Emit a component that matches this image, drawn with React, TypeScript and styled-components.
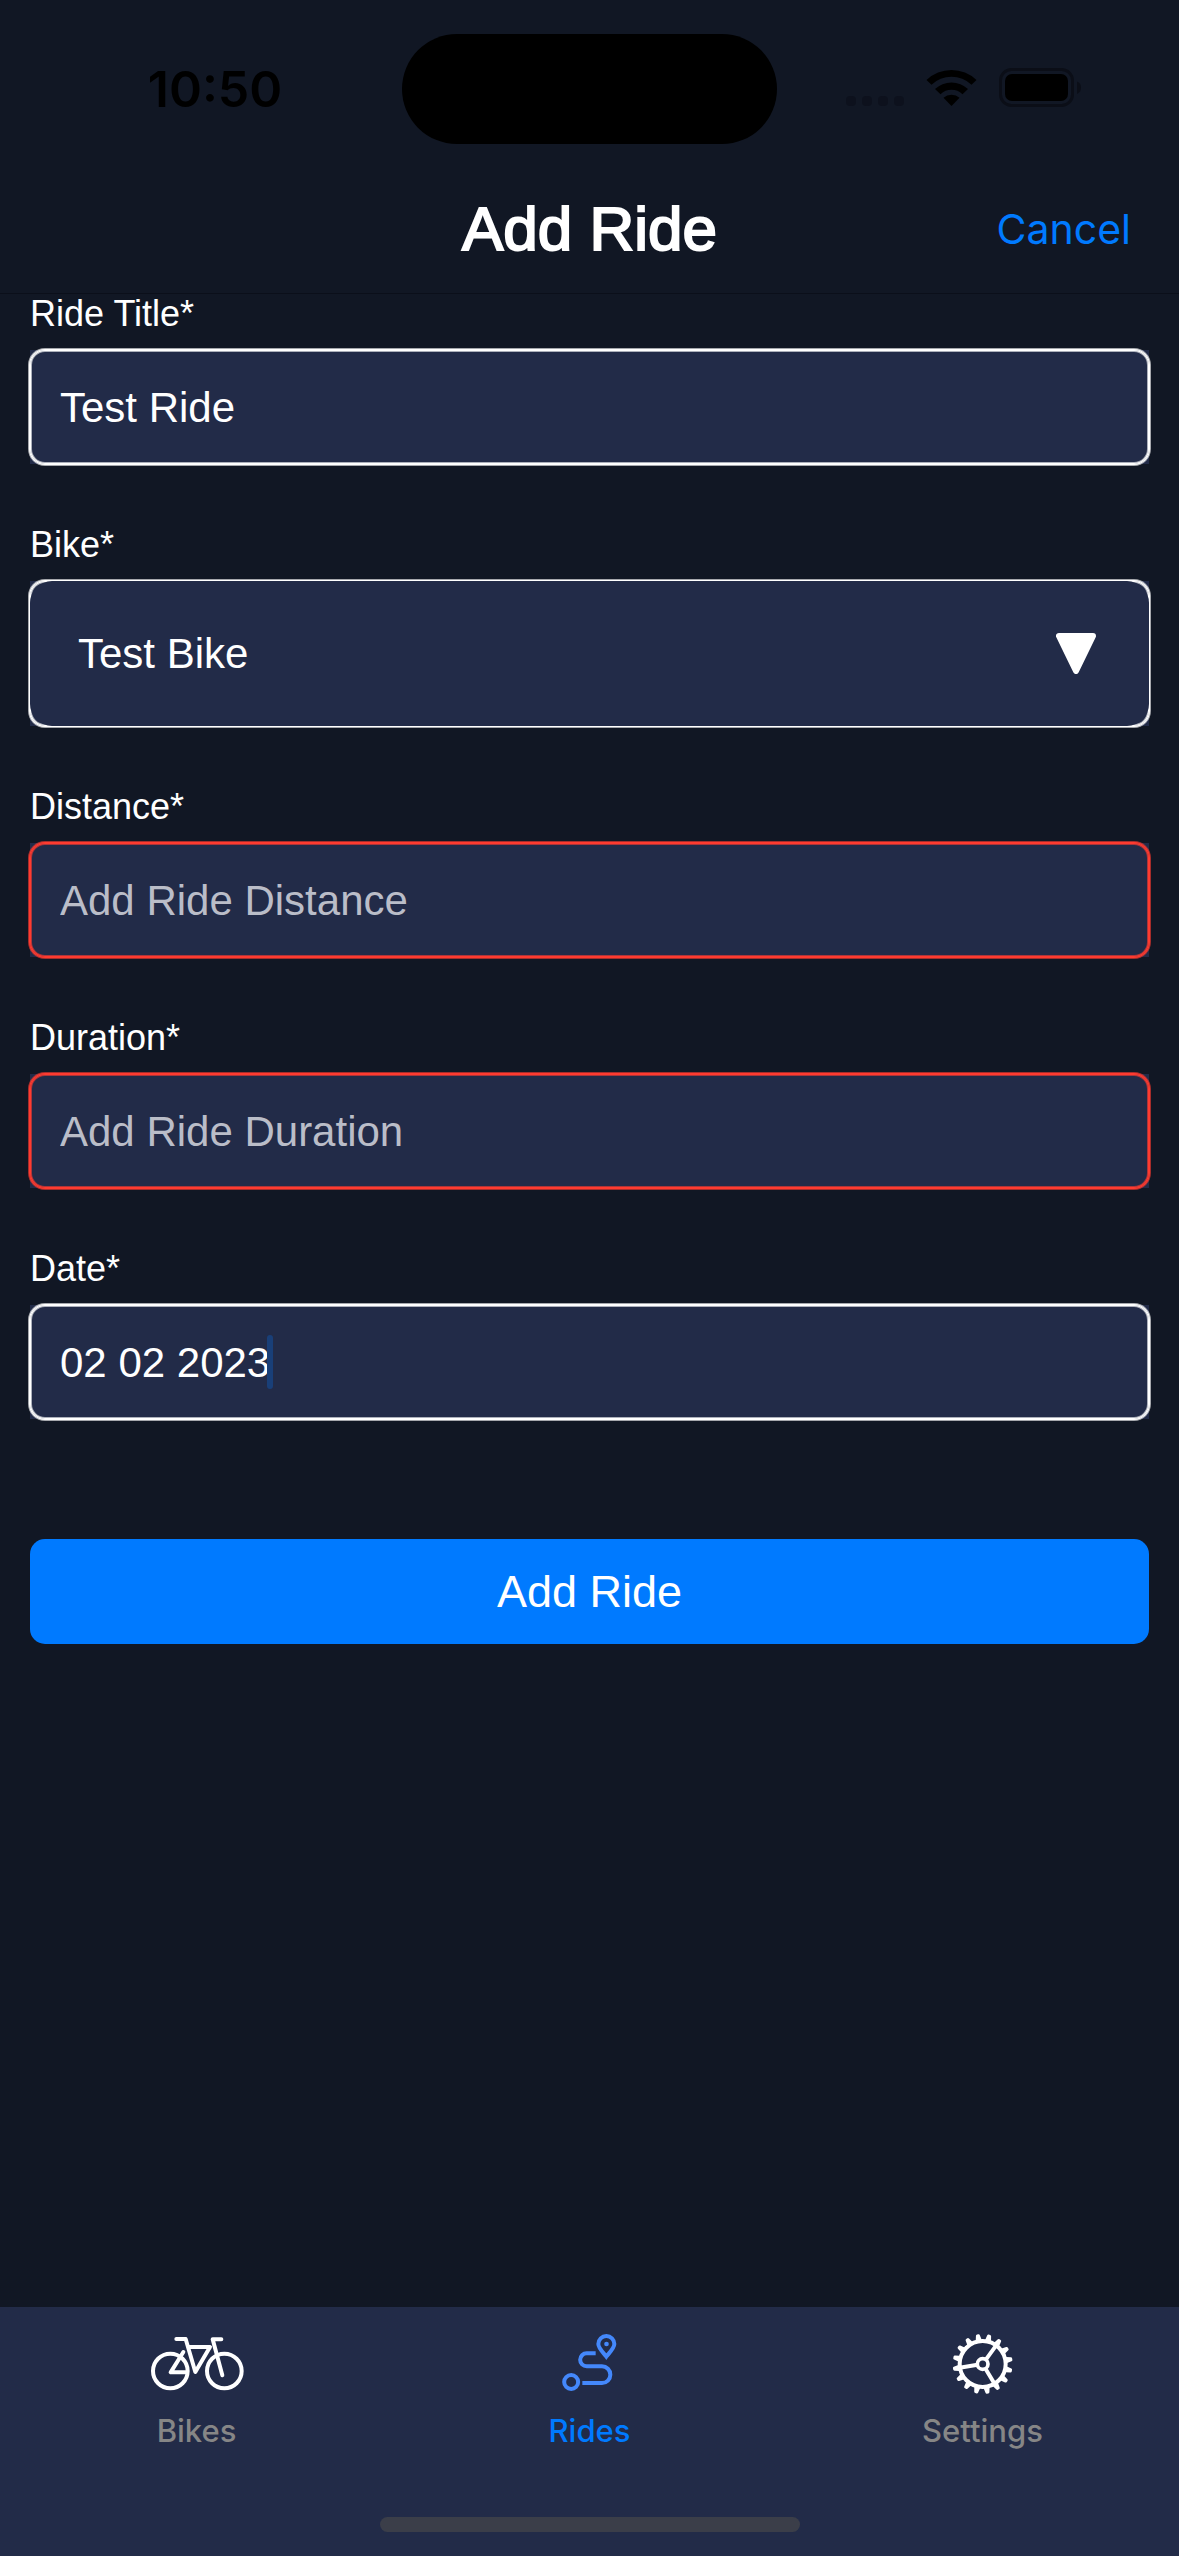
import React, { useState } from "react";
import styled, { createGlobalStyle } from "styled-components";

const color = {
  page: "#111724",
  panel: "#222b48",
  blue: "#007aff",
  red: "#ff3b30",
  white: "#ffffff",
  muted: "#868686",
};

const sans = `"Liberation Sans", Arial, sans-serif`;
const system = `Inter, "Liberation Sans", sans-serif`;

const GlobalStyle = createGlobalStyle`
  *, *::before, *::after { box-sizing: border-box; }
  body { margin: 0; background: ${color.page}; font-family: ${sans}; }
  button, input, select { font: inherit; }
`;

const Screen = styled.div`
  min-height: 100vh;
  display: flex;
  flex-direction: column;
  color: ${color.white};
`;

const StatusBar = styled.div`
  display: grid;
  grid-template-columns: 1fr 375px 1fr;
  align-items: center;
  padding: 34px 0 20px;
  color: #000;
`;

const Clock = styled.time`
  padding-left: 28px;
  text-align: center;
  font: 600 50px/60px ${system};
`;

const Island = styled.div`
  height: 110px;
  border-radius: 55px;
  background: #000;
`;

const StatusIcons = styled.div`
  display: flex;
  justify-content: flex-end;
  align-items: center;
  padding-right: 96px;
  svg { display: block; }
`;

const Header = styled.header`
  display: grid;
  grid-template-columns: 1fr auto 1fr;
  align-items: center;
  height: 130px;
  padding: 0 48px;
  border-bottom: 1px solid #0b0f1a;
`;

const Title = styled.h1`
  grid-column: 2;
  margin: 0;
  font-size: 62px;
  font-weight: 400;
  line-height: 72px;
  -webkit-text-stroke: 2px ${color.white};
`;

const CancelButton = styled.button`
  justify-self: end;
  padding: 0;
  border: 0;
  background: none;
  color: ${color.blue};
  font: 400 41px/48px ${system};
`;

const Form = styled.form`
  flex: 1;
  display: flex;
  flex-direction: column;
  gap: 61px;
  padding: 0 30px;
`;

const Field = styled.div`
  display: flex;
  flex-direction: column;
  gap: 16px;
`;

const Label = styled.label`
  font-size: 36px;
  line-height: 40px;
`;

const FieldBack = styled.div`
  background: ${color.panel};
`;

const FieldFrame = styled.div<{ $invalid?: boolean }>`
  --line: ${(p) => (p.$invalid ? color.red : color.white)};
  --edge: ${(p) => (p.$invalid ? "#ff3b30a0" : "#ffffffa0")};
  position: relative;
  display: flex;
  border-radius: 15px;
  box-shadow:
    inset 0 0 0 1px var(--line),
    inset 0 0 0 2px var(--edge),
    0 0 0 1px var(--line),
    0 0 0 2px var(--edge);
`;

const TextInput = styled.input`
  flex: 1;
  min-width: 0;
  height: 114px;
  padding: 2px 30px 0;
  border: 0;
  outline: 0;
  background: none;
  color: ${color.white};
  font-size: 42px;
  &::placeholder { color: #babdc8; opacity: 1; }
`;

const Select = styled.select`
  flex: 1;
  height: 145px;
  padding: 0 48px;
  border: 0;
  border-radius: 22px;
  outline: 0;
  appearance: none;
  background: ${color.panel};
  color: ${color.white};
  font-size: 42px;
`;

const SelectArrow = styled.svg`
  position: absolute;
  right: 53px;
  top: 52px;
  pointer-events: none;
`;

const Caret = styled.span`
  position: absolute;
  left: 237px;
  top: 30px;
  width: 6px;
  height: 54px;
  border-radius: 3px;
  background: #193f78;
`;

const SubmitButton = styled.button`
  height: 105px;
  margin-top: 59px;
  border: 0;
  border-radius: 15px;
  background: ${color.blue};
  color: ${color.white};
  font-size: 45px;
`;

const TabBar = styled.footer`
  background: ${color.panel};
`;

const Tabs = styled.nav`
  display: grid;
  grid-template-columns: repeat(3, 1fr);
  padding: 27px 0 60px;
`;

const Tab = styled.a<{ $active?: boolean }>`
  display: flex;
  flex-direction: column;
  align-items: center;
  gap: 19px;
  color: ${(p) => (p.$active ? color.blue : color.muted)};
  font: 500 31px/36px ${system};
  text-decoration: none;
  svg { display: block; overflow: visible; }
`;

const HomeIndicator = styled.div`
  width: 420px;
  height: 15px;
  margin: 8px auto 24px;
  border-radius: 8px;
  background: #3b3e49;
`;

function StatusGlyphs() {
  return (
    <svg width="238" height="42" viewBox="845 68 238 42" aria-hidden="true">
      <g fill="#0d111d">
        {[846, 862, 878, 894].map((x) => (
          <rect key={x} x={x} y="96" width="10" height="10" rx="4" />
        ))}
      </g>
      <path d="M926.5 80 A36 36 0 0 1 976.5 80 L971.5 84.7 A29 29 0 0 0 931.5 84.7 Z" />
      <path d="M935 89 A24 24 0 0 1 968 89 L962.5 94.2 A16 16 0 0 0 940.5 94.2 Z" />
      <path d="M943.5 97.8 A12 12 0 0 1 959.5 97.8 L951.5 106 Z" />
      <rect x="1000.5" y="69.5" width="72" height="36" rx="11" fill="none" stroke="#0b0e17" strokeWidth="3" />
      <rect x="1005" y="74" width="63" height="27" rx="7" />
      <path d="M1077 81.5 Q1081 83 1081 87.5 T1077 94 Z" fill="#0b0e17" />
    </svg>
  );
}

function BikeIcon() {
  return (
    <svg width="95" height="60" viewBox="147 132 285 180" fill="none" stroke="#fff" strokeWidth="12" strokeLinecap="round" strokeLinejoin="round" aria-hidden="true">
      <circle cx="211" cy="243" r="52" />
      <circle cx="373" cy="243" r="52" />
      <path d="M229 147 H257 L286 246 L330 171 H266" />
      <path d="M364 148 H338 L367 256" />
      <path d="M250 186 L212 247 H258" />
    </svg>
  );
}

function RouteIcon() {
  return (
    <svg width="60" height="60" viewBox="179 132 180 180" fill="none" stroke="#4488fb" strokeWidth="12" aria-hidden="true">
      <circle cx="212.500" cy="276" r="21" />
      <path d="M246 279 H305 A25 25 0 0 0 305 229 H259 A19.500 19.500 0 0 1 259 190 H286" />
      <path d="M318 200 C309 188 294 174 294 162 A24 24 0 0 1 342 162 C342 174 327 188 318 200 Z" />
      <circle cx="318.500" cy="162" r="7" fill="#4488fb" stroke="none" />
    </svg>
  );
}

function GearIcon() {
  const teeth = Array.from({ length: 16 }, (_, i) => i * 22.5 - 9.5);
  return (
    <svg width="60" height="60" viewBox="-89 -90 180 180" fill="none" stroke="#fff" strokeLinecap="round" aria-hidden="true">
      <circle r="69" strokeWidth="12" />
      <circle r="16" strokeWidth="11" />
      {teeth.map((a) => (
        <path key={a} d="M-5 -72 L-2 -86 H2 L5 -72 Z" fill="#fff" strokeWidth="8" strokeLinejoin="round" transform={`rotate(${a})`} />
      ))}
      {[36, 149, 261].map((a) => (
        <path key={a} d="M0 -20 V-70" strokeWidth="12" transform={`rotate(${a})`} />
      ))}
    </svg>
  );
}

export default function App() {
  const [title, setTitle] = useState("Test Ride");
  const [distance, setDistance] = useState("");
  const [duration, setDuration] = useState("");
  const [date, setDate] = useState("02 02 2023");

  const renderText = (
    id: string,
    label: string,
    value: string,
    onChange: (v: string) => void,
    placeholder?: string,
    caret?: boolean,
  ) => (
    <Field>
      <Label htmlFor={id}>{label}</Label>
      <FieldBack>
        <FieldFrame $invalid={value === ""}>
          <TextInput id={id} value={value} placeholder={placeholder} onChange={(e) => onChange(e.target.value)} />
          {caret && <Caret />}
        </FieldFrame>
      </FieldBack>
    </Field>
  );

  return (
    <>
      <GlobalStyle />
      <Screen>
        <StatusBar>
          <Clock>10:50</Clock>
          <Island />
          <StatusIcons>
            <StatusGlyphs />
          </StatusIcons>
        </StatusBar>
        <Header>
          <Title>Add Ride</Title>
          <CancelButton type="button">Cancel</CancelButton>
        </Header>
        <Form onSubmit={(e) => e.preventDefault()}>
          {renderText("title", "Ride Title*", title, setTitle)}
          <Field>
            <Label htmlFor="bike">Bike*</Label>
            <FieldBack>
              <FieldFrame>
                <Select id="bike">
                  <option>Test Bike</option>
                </Select>
                <SelectArrow width="40" height="41" viewBox="0 0 40 41" aria-hidden="true">
                  <path d="M3 3 H37 L20 38 Z" fill="#fff" stroke="#fff" strokeWidth="6" strokeLinejoin="round" />
                </SelectArrow>
              </FieldFrame>
            </FieldBack>
          </Field>
          {renderText("distance", "Distance*", distance, setDistance, "Add Ride Distance")}
          {renderText("duration", "Duration*", duration, setDuration, "Add Ride Duration")}
          {renderText("date", "Date*", date, setDate, undefined, true)}
          <SubmitButton type="submit">Add Ride</SubmitButton>
        </Form>
        <TabBar>
          <Tabs>
            <Tab href="#bikes">
              <BikeIcon />
              Bikes
            </Tab>
            <Tab href="#rides" $active>
              <RouteIcon />
              Rides
            </Tab>
            <Tab href="#settings">
              <GearIcon />
              Settings
            </Tab>
          </Tabs>
          <HomeIndicator />
        </TabBar>
      </Screen>
    </>
  );
}
